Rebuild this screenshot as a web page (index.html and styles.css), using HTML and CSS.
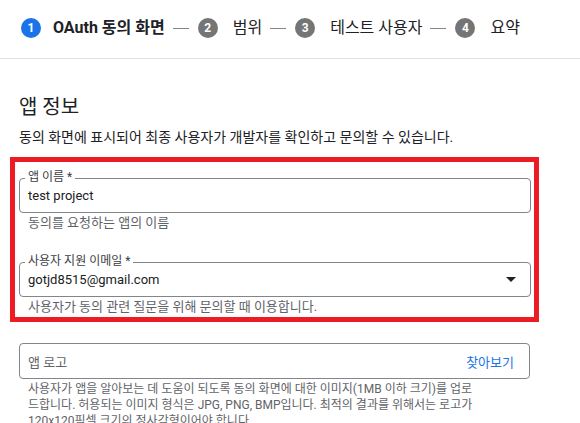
FILE: index.html
```html
<!DOCTYPE html>
<html lang="ko">
<head>
<meta charset="utf-8">
<title>OAuth 동의 화면</title>
<link rel="stylesheet" href="styles.css">
</head>
<body>
<nav class="stepper">
  <div class="step active"><span class="num">1</span><span class="step-label">OAuth 동의 화면</span></div>
  <span class="sep"></span>
  <div class="step"><span class="num">2</span><span class="step-label">범위</span></div>
  <span class="sep"></span>
  <div class="step"><span class="num">3</span><span class="step-label">테스트 사용자</span></div>
  <span class="sep"></span>
  <div class="step"><span class="num">4</span><span class="step-label">요약</span></div>
</nav>
<main class="content">
  <h1 class="title">앱 정보</h1>
  <p class="desc">동의 화면에 표시되어 최종 사용자가 개발자를 확인하고 문의할 수 있습니다.</p>
  <section class="highlight">
    <div class="field">
      <span class="float-label">앱 이름 *</span>
      <span class="value">test project</span>
    </div>
    <div class="hint hint-box">동의를 요청하는 앱의 이름</div>
    <div class="field field-second">
      <span class="float-label">사용자 지원 이메일 *</span>
      <span class="value">gotjd8515@gmail.com</span>
      <svg class="arrow" width="10" height="5" viewBox="0 0 10 5"><polygon points="0,0 10,0 5,5" fill="#202124"/></svg>
    </div>
    <div class="hint hint-box">사용자가 동의 관련 질문을 위해 문의할 때 이용합니다.</div>
  </section>
  <div class="field field-logo">
    <span class="placeholder">앱 로고</span>
    <span class="browse">찾아보기</span>
  </div>
  <div class="hint hint-logo">사용자가 앱을 알아보는 데 도움이 되도록 동의 화면에 대한 이미지(1MB 이하 크기)를 업로<br>드합니다. 허용되는 이미지 형식은 JPG, PNG, BMP입니다. 최적의 결과를 위해서는 로고가<br>120x120픽셀 크기의 정사각형이어야 합니다.</div>
</main>
</body>
</html>
```
FILE: styles.css
```css
* { box-sizing: border-box; }
html, body { margin: 0; background: #fff; }
body {
  font-family: Roboto, "Noto Sans CJK KR", sans-serif;
  color: #202124;
  overflow: hidden;
}
.stepper {
  height: 59px;
  border-bottom: 1px solid #e0e0e0;
  display: flex;
  align-items: center;
  padding: 0 0 2px 21px;
}
.step { display: flex; align-items: center; }
.num {
  width: 20px; height: 20px; border-radius: 50%;
  background: #757575; color: #fff;
  font-size: 12px; font-weight: 700;
  display: flex; align-items: center; justify-content: center;
  line-height: 1;
}
.step.active .num { background: #1a73e8; }
.step-label { margin-left: 15px; font-size: 16px; line-height: 20px; color: #202124; }
.step.active .step-label { margin-left: 12px; font-weight: 700; }
.sep { width: 16px; height: 1px; background: #80868b; margin: 0 9px 0 8px; }
.title {
  margin: 34px 0 0 19px;
  font-size: 20px; font-weight: 400; line-height: 28px;
}
.desc { margin: 7px 0 0 19px; font-size: 14px; line-height: 18px; }
.highlight {
  margin: 11px 0 0 10px;
  width: 529px;
  border: 5px solid #ed1c24;
  padding: 16px 3px 2px 4px;
}
.field {
  position: relative;
  height: 35px;
  border: 1px solid #80868b;
  border-radius: 4px;
  display: flex;
  align-items: center;
  padding: 0 15px 0 8px;
  font-size: 13px;
}
.field-second { margin-top: 31px; }
.float-label {
  position: absolute;
  top: -8px; left: 5px;
  padding: 0 3px;
  background: #fff;
  font-size: 12px; line-height: 12px;
  color: #3c4043;
}
.value { flex: 1; color: #202124; }
.arrow { margin-right: -1px; }
.hint {
  padding-left: 9px;
  font-size: 12px; line-height: 16px;
  color: #5f6368;
}
.hint-box { font-size: 13px; padding-top: 2px; }
.field-logo {
  margin: 21px 0 0 19px;
  width: 511px;
  height: 36px;
  justify-content: space-between;
}
.placeholder { color: #5f6368; }
.browse { color: #1a73e8; }
.hint-logo { margin: 2px 0 0 19px; }
```
